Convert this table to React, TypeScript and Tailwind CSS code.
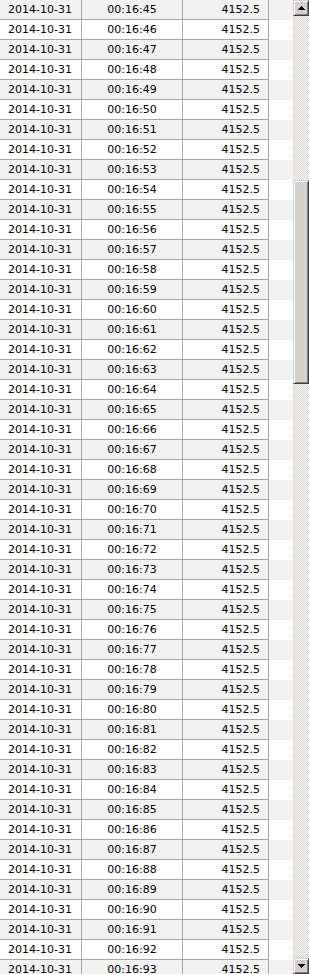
import React from "react";

const rows = Array.from({ length: 49 }, (_, i) => 45 + i);

function Btn({ dir }: { dir: "up" | "down" }) {
  return (
    <div className="h-4 w-4 flex items-center justify-center bg-[#d4d0c8] border border-t-[#d4d0c8] border-l-[#d4d0c8] border-r-[#404040] border-b-[#404040] shadow-[inset_1px_1px_#ffffff,inset_-1px_-1px_#808080]">
      <svg width="7" height="4" viewBox="0 0 7 4" shapeRendering="crispEdges">
        {dir === "up" ? (
          <path d="M3 0h1v1h1v1h1v1h1v1H0V3h1V2h1V1h1z" fill="#000" />
        ) : (
          <path d="M0 0h7v1H6v1H5v1H4v1H3V3H2V2H1V1H0z" fill="#000" />
        )}
      </svg>
    </div>
  );
}

export default function App() {
  return (
    <div className="w-[309px] h-[974px] overflow-hidden flex bg-white text-black font-['DejaVu_Sans',sans-serif] text-[11px]">
      <div className="w-[293px] flex flex-col">
        {rows.map((n, i) => (
          <div
            key={n}
            className={`flex h-5 shrink-0 ${i % 2 === 0 ? "bg-[#f2f2f2]" : "bg-white"}`}
          >
            <div className="w-[269px] flex border-b border-[#a6a6a6] leading-[19px]">
              <div className="w-[82px] border-r border-[#a6a6a6] pl-2">2014-10-31</div>
              <div className="w-[101px] border-r border-[#a6a6a6] text-center">00:16:{n}</div>
              <div className="w-[86px] border-r border-[#a6a6a6] text-right pr-2">4152.5</div>
            </div>
            <div className="flex-1" />
          </div>
        ))}
      </div>
      <div className="w-4 flex flex-col">
        <Btn dir="up" />
        <div className="flex-1 flex flex-col bg-[image:repeating-conic-gradient(#d4d0c8_0%_25%,#ffffff_0%_50%)] bg-[length:2px_2px]">
          <div className="h-[164px] shrink-0" />
          <div className="h-[204px] shrink-0 bg-[#d4d0c8] border border-t-[#d4d0c8] border-l-[#d4d0c8] border-r-[#404040] border-b-[#404040] shadow-[inset_1px_1px_#ffffff,inset_-1px_-1px_#808080]" />
        </div>
        <Btn dir="down" />
      </div>
    </div>
  );
}
